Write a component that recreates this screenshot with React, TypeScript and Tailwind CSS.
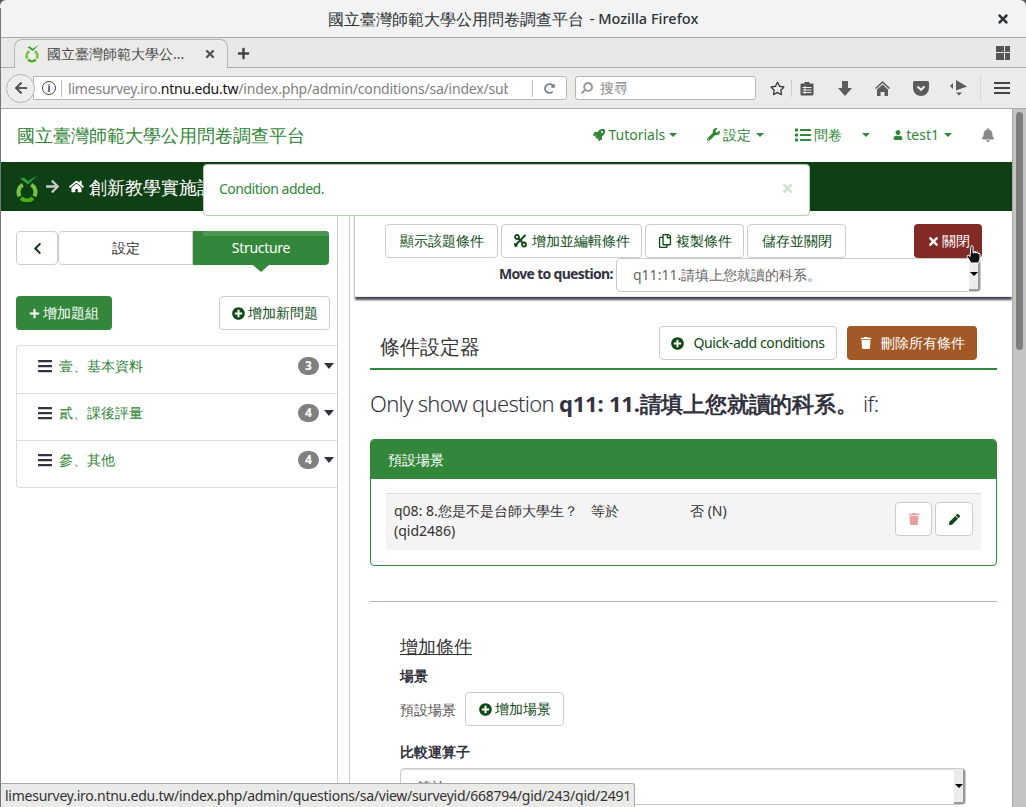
import React from "react";
import {
  FaRocket, FaWrench, FaList, FaUser, FaBell, FaHome, FaPlus, FaPlusCircle, FaTrash, FaPen,
  FaTimes, FaRegCopy, FaChevronLeft, FaBars, FaArrowRight, FaArrowLeft,
  FaRegStar, FaSearch, FaRedoAlt,
} from "react-icons/fa";

function Logo({ size = 22 }: { size?: number }) {
  return (
    <svg width={size} height={(size * 27) / 22} viewBox="0 0 22 27" fill="none">
      <path d="M6.750 9.640A8.500 8.500 0 0 0 3.640 21.250" stroke="#7cc242" strokeWidth="4" />
      <path d="M5 23A8.500 8.500 0 0 0 17 23" stroke="#4aad1c" strokeWidth="4" />
      <path d="M18.360 21.250A8.500 8.500 0 0 0 15.250 9.640" stroke="#7cc242" strokeWidth="4" />
      <path d="M4 3.500L8 2.500L12 6L22 0L12 9.500z" fill="#2f9a3a" />
    </svg>
  );
}

function Caret({ className = "" }: { className?: string }) {
  return <span className={`inline-block w-0 h-0 border-x-[4px] border-x-transparent border-t-[4px] border-t-current ${className}`} />;
}

function Browser() {
  return (
    <div className="flex flex-col shrink-0 font-[Roboto,'Noto_Sans_CJK_TC',sans-serif]">
      <div className="h-[38px] bg-[#f3f3f3] border-b border-[#a9a9a7] rounded-t-[6px] flex items-center justify-center relative text-[#2e3436] whitespace-nowrap">
        <span className="text-[16px] font-medium leading-none">國立臺灣師範大學公用問卷調查平台</span>
        <span className="ml-[6px] text-[14.5px] font-medium leading-none">- Mozilla Firefox</span>
        <FaTimes className="absolute right-[16px] top-[12px] text-[14px] text-[#2e3436]" />
      </div>
      <div className="h-[30px] bg-[#e8e8e7] border-b border-[#adadab] flex items-end pl-[14px] pr-[16px] relative">
        <div className="w-[214px] h-[29px] bg-[#ebebe9] border border-b-0 border-[#b5b5b3] rounded-t-[8px] flex items-center pl-[10px] pr-[11px] -mb-px">
          <Logo size={14} />
          <span className="ml-[8px] text-[14px] text-[#4a4a4a] whitespace-nowrap leading-none">國立臺灣師範大學公...</span>
          <FaTimes className="ml-auto text-[12px] text-[#555]" />
        </div>
        <FaPlus className="ml-[9px] mb-[7px] text-[13px] text-[#444]" />
        <div className="ml-auto mb-[7px] grid grid-cols-[8px_5px] grid-rows-[6px_7px] gap-[1px]">
          <span className="bg-[#555]" /><span className="bg-[#555]" /><span className="bg-[#555]" /><span className="bg-[#555]" />
        </div>
      </div>
      <div className="h-[41px] bg-[#ebebe9] border-b border-[#adadab] flex items-center pl-[6px]">
        <div className="w-[29px] h-[29px] rounded-full bg-[#eeeeec] border border-[#b5b5b3] flex items-center justify-center z-10 shrink-0">
          <FaArrowLeft className="text-[14px] text-[#555]" />
        </div>
        <div className="-ml-[2px] w-[534px] h-[24px] bg-white border border-[#b8b8b6] rounded-r-[3px] flex items-center pl-[8px] text-[14px] whitespace-nowrap overflow-hidden shrink-0">
          <span className="w-[14px] h-[14px] rounded-full border border-[#444] text-[10px] leading-[12px] text-center text-[#444] shrink-0 font-bold">i</span>
          <span className="ml-[5px] w-px h-[17px] bg-[#bbb] shrink-0" />
          <span className="ml-[6px] w-[440px] overflow-hidden text-[#808080] shrink-0 tracking-[-0.2px]">limesurvey.iro.<span className="text-[#111]">ntnu.edu.tw</span>/index.php/admin/conditions/sa/index/subaction</span>
          <span className="ml-auto w-px h-[17px] bg-[#bbb] shrink-0" />
          <FaRedoAlt className="mx-[11px] text-[11px] text-[#77808a] shrink-0" />
        </div>
        <div className="ml-[8px] w-[181px] h-[24px] bg-white border border-[#b8b8b6] rounded-[3px] flex items-center pl-[5px] text-[14px] text-[#8a8a8a] leading-none shrink-0">
          <FaSearch className="text-[12px] text-[#9a9a9a] mr-[7px] scale-x-[-1]" />搜尋
        </div>
        <FaRegStar className="ml-[14px] text-[15px] text-[#333] shrink-0" />
        <span className="ml-[6px] w-px h-[17px] bg-[#ccc] shrink-0" />
        <svg className="ml-[8px] shrink-0" width="14" height="15" viewBox="0 0 14 15" fill="none">
          <path d="M1.500 2.500h3V1h5v1.500h3A1 1 0 0 1 13.500 3.500v10a1 1 0 0 1-1 1h-11a1 1 0 0 1-1-1v-10a1 1 0 0 1 1-1z" fill="#555" />
          <path d="M2.500 6.500h9M2.500 9h9M2.500 11.500h9M5 5v8" stroke="#ebebe9" strokeWidth="1" />
        </svg>
        <svg className="ml-[24px] shrink-0" width="14" height="15" viewBox="0 0 14 15"><path d="M4 0h6v7h4l-7 8-7-8h4z" fill="#5c5c5c" /></svg>
        <svg className="ml-[23px] shrink-0" width="15" height="15" viewBox="0 0 15 15" fill="#5c5c5c">
          <path d="M7.500 0L15 7l-1 1-6.500-6L1 8 0 7z" />
          <path d="M7.500 3.500L13 8.500V15H9.500v-4h-4v4H2V8.500z" />
        </svg>
        <svg className="ml-[23px] shrink-0" width="16" height="15" viewBox="0 0 16 15">
          <path d="M1.500 0h13A1.500 1.500 0 0 1 16 1.500V7A8 8 0 0 1 0 7V1.500A1.500 1.500 0 0 1 1.500 0z" fill="#5c5c5c" />
          <path d="M4.500 5.500L8 8.800 11.500 5.500" stroke="#eee" strokeWidth="2" fill="none" />
        </svg>
        <svg className="ml-[21px] shrink-0" width="17" height="16" viewBox="0 0 17 16" fill="#5c5c5c">
          <path d="M6 0L17 6.500 6 10.500zM0 6l3-3v6zM6 12.500h6L9 15.500z" />
        </svg>
        <span className="ml-[13px] w-px h-[26px] bg-[#d8d8d6] shrink-0" />
        <div className="ml-[13px] flex flex-col gap-[3px] shrink-0">
          <span className="w-[16px] h-[2px] bg-[#444]" /><span className="w-[16px] h-[2px] bg-[#444]" /><span className="w-[16px] h-[2px] bg-[#444]" />
        </div>
      </div>
    </div>
  );
}

function NavItem({ icon, label, gap = "ml-[5px]" }: { icon: React.ReactNode; label: string; gap?: string }) {
  return (
    <span className="flex items-center text-[14px] text-[#328637] whitespace-nowrap leading-none -mt-[2px]">
      {icon}
      <span className="ml-[3px]">{label}</span>
      <Caret className={gap} />
    </span>
  );
}

function Btn({ children, className = "" }: { children: React.ReactNode; className?: string }) {
  return (
    <div className={`h-[34px] border border-[#cccccc] rounded-[4px] bg-white flex items-center justify-center text-[14px] text-[#0f4a17] leading-none whitespace-nowrap ${className}`}>
      {children}
    </div>
  );
}

function Sidebar() {
  const rows = [
    ["壹、基本資料", "3"],
    ["貳、課後評量", "4"],
    ["參、其他", "4"],
  ];
  return (
    <div className="w-[338px] shrink-0 border-r border-[#cccccc] pl-[16px] pt-[20px]">
      <div className="flex h-[34px] w-[313px]">
        <div className="w-[42px] border border-[#cccccc] rounded-[4px] flex items-center justify-center text-[#14301a]">
          <FaChevronLeft className="text-[13px]" />
        </div>
        <div className="w-[135px] border border-[#cccccc] rounded-l-[4px] flex items-center justify-center text-[14px] text-[#333] leading-none">設定</div>
        <div className="w-[136px] bg-[#33873a] rounded-r-[4px] flex items-center justify-center text-[14px] text-white relative leading-none tracking-[-0.3px]">
          Structure
          <span className="absolute left-[10px] right-0 top-0 h-[5px] bg-[#4e9654] rounded-tr-[4px]" />
          <span className="absolute left-[60px] top-[34px] w-0 h-0 border-x-[8px] border-x-transparent border-t-[7px] border-t-[#33873a]" />
        </div>
      </div>
      <div className="mt-[31px] flex w-[314px] justify-between">
        <div className="w-[96px] h-[34px] rounded-[4px] bg-[#33873a] text-white flex items-center justify-center text-[14px] leading-none">
          <FaPlus className="text-[11px] mr-[3px]" />增加題組
        </div>
        <Btn className="w-[111px]"><FaPlusCircle className="text-[13px] mr-[3px]" />增加新問題</Btn>
      </div>
      <div className="mt-[15px] border border-r-0 border-[#dddddd] rounded-l-[4px]">
        {rows.map(([t, n], i) => (
          <div key={t} className={`h-[47px] flex items-center pl-[20px] pb-[8px] ${i > 0 ? "border-t border-[#dddddd]" : ""}`}>
            <FaBars className="text-[16px] text-[#333340]" />
            <span className="ml-[6px] text-[14px] text-[#328637] leading-none">{t}</span>
            <span className="ml-auto w-[21px] h-[18px] rounded-full bg-[#808080] text-white text-[12px] font-bold flex items-center justify-center">{n}</span>
            <span className="ml-[5px] mr-[3px] w-0 h-0 border-x-[5px] border-x-transparent border-t-[6px] border-t-[#333340]" />
          </div>
        ))}
      </div>
    </div>
  );
}

function Main() {
  return (
    <div className="flex-1 min-w-0 ml-[11px] border-l border-[#cccccc] relative">
      <div className="h-[86px] ml-[5px] bg-white shadow-[0_3px_2px_#4a4a55] border-b border-[#e8e8e8] relative pt-[13px]">
        <div className="flex pl-[30px] gap-[3px]">
          <Btn className="w-[113px]">顯示該題條件</Btn>
          <Btn className="w-[141px] bg-[#e6e6e6] border-[#adadad]">
            <svg className="mr-[5px]" width="13" height="14" viewBox="0 0 13 14" fill="none" stroke="#0f4a17">
              <circle cx="3" cy="3" r="2" strokeWidth="1.800" />
              <circle cx="10" cy="10.500" r="2" strokeWidth="1.800" />
              <path d="M4.500 4.500L9 9" strokeWidth="2" />
              <path d="M11.500 1L2 10.500M2 13l-1-2.500 2.500 1" strokeWidth="2" />
            </svg>
            增加並編輯條件
          </Btn>
          <Btn className="w-[99px]"><FaRegCopy className="text-[14px] mr-[4px]" />複製條件</Btn>
          <Btn className="w-[99px]">儲存並關閉</Btn>
          <div className="ml-[65px] w-[68px] h-[34px] rounded-[4px] bg-[#822a25] text-white text-[14px] flex items-center justify-center leading-none">
            <FaTimes className="text-[13px] mr-[2px]" />關閉
          </div>
        </div>
        <div className="flex items-center h-[34px]">
          <span className="ml-[144px] text-[14px] font-bold text-[#333340] w-[117px] whitespace-nowrap -mt-[2px] leading-none tracking-[-0.7px]">Move to question:</span>
          <div className="w-[365px] h-[34px] border border-[#cccccc] rounded-[4px] flex items-center pl-[16px] text-[14px] text-[#666] relative overflow-hidden leading-none">
            q11:11.請填上您就讀的科系。
            <span className="absolute right-0 top-0 bottom-0 w-[11px] bg-[#ececec] border-r-2 border-b-2 border-[#999] flex items-center justify-center text-black">
              <Caret />
            </span>
          </div>
        </div>
      </div>

      <div className="pl-[20px] pr-[15px]">
        <div className="mt-[29px] h-[44px] border-b-[2px] border-[#33873a] flex items-start">
          <span className="ml-[10px] mt-[7px] text-[20px] leading-[28px] text-[#333]">條件設定器</span>
          <Btn className="ml-auto w-[178px] tracking-[-0.4px]"><FaPlusCircle className="text-[13px] mr-[9px]" />Quick-add conditions</Btn>
          <div className="ml-[10px] mr-[20px] w-[130px] h-[34px] rounded-[4px] bg-[#a35827] text-white text-[14px] flex items-center justify-center leading-none">
            <FaTrash className="text-[12px] mr-[9px]" />刪除所有條件
          </div>
        </div>
        <div className="mt-[18px] text-[22px] leading-[30px] font-light text-[#333340] whitespace-nowrap">
          <span className="tracking-[-0.7px]">Only show question </span><b className="font-bold tracking-[-0.2px]">q11: 11.請填上您就讀的科系。</b><span className="tracking-[-0.5px]"> if:</span>
        </div>
        <div className="mt-[21px] h-[127px] border border-[#33873a] rounded-[4px] overflow-hidden">
          <div className="h-[39px] bg-[#33873a] text-white text-[14px] flex items-center pl-[17px] leading-none">預設場景</div>
          <div className="mt-[14px] mx-[15px] h-[57px] bg-[#f4f4f4] border-t border-[#dddddd] flex text-[14px] leading-[20px] text-[#333] relative">
            <div className="ml-[8px] mt-[7px] w-[197px]">q08: 8.您是不是台師大學生？ (qid2486)</div>
            <div className="mt-[7px] w-[99px]">等於</div>
            <div className="mt-[7px]">否 (N)</div>
            <div className="ml-auto mr-[8px] mt-[8px] flex gap-[3px]">
              <Btn className="w-[37px]"><FaTrash className="text-[12px] text-[#e6a0a0]" /></Btn>
              <Btn className="w-[38px]"><FaPen className="text-[11px]" /></Btn>
            </div>
          </div>
        </div>
        <div className="mt-[35px] border-t border-[#a9bba9]" />
        <div className="pl-[30px] text-[14px] text-[#333340]">
          <div className="mt-[32px] text-[18px] leading-[24px] underline text-[#333]">增加條件</div>
          <div className="mt-[8px] font-bold leading-[20px]">場景</div>
          <div className="mt-[6px] flex items-center">
            <span className="text-[#555]">預設場景</span>
            <Btn className="ml-[9px] w-[99px]"><FaPlusCircle className="text-[13px] mr-[3px]" />增加場景</Btn>
          </div>
          <div className="mt-[16px] font-bold leading-[20px]">比較運算子</div>
          <div className="mt-[6px] w-[566px] h-[37px] border border-[#cccccc] rounded-[4px] shadow-[inset_0_1px_1px_#ddd] flex items-center pl-[16px] text-[#666] relative overflow-hidden">
            等於
            <span className="absolute right-0 top-0 bottom-0 w-[11px] bg-[#ececec] border-r-2 border-b-2 border-[#999] flex items-center justify-center text-black">
              <Caret />
            </span>
          </div>
        </div>
      </div>
    </div>
  );
}

export default function App() {
  return (
    <div className="font-[Roboto,'Noto_Sans_CJK_TC',sans-serif] w-[1026px] h-[807px] relative overflow-hidden flex flex-col bg-[#555]">
      <Browser />
      <div className="flex-1 min-h-0 flex bg-white">
        <div className="flex-1 min-w-0 flex flex-col">
          <div className="h-[53px] shrink-0 flex items-center pl-[17px] pr-[17px]">
            <span className="text-[18px] text-[#328637] leading-none -mt-[2px]">國立臺灣師範大學公用問卷調查平台</span>
            <div className="ml-auto flex items-center">
              <NavItem icon={<FaRocket className="text-[12px]" />} label="Tutorials" gap="ml-[4px]" />
              <span className="ml-[30px]"><NavItem icon={<FaWrench className="text-[13px]" />} label="設定" /></span>
              <span className="ml-[31px]"><NavItem icon={<FaList className="text-[16px]" />} label="問卷" gap="ml-[20px]" /></span>
              <span className="ml-[23px]"><NavItem icon={<FaUser className="text-[10px]" />} label="test1" /></span>
              <FaBell className="ml-[29px] text-[14px] text-[#8a8a8a] -mt-[2px]" />
            </div>
          </div>
          <div className="h-[49px] shrink-0 bg-[#0f4015] flex items-center pl-[16px] text-white text-[18px] whitespace-nowrap overflow-hidden leading-none">
            <span className="mt-[3px]"><Logo size={22} /></span>
            <FaArrowRight className="ml-[7px] text-[15px] text-[#c9c9c9]" />
            <FaHome className="ml-[9px] text-[15px]" />
            <span className="ml-[5px]">創新教學實施計畫</span>
          </div>
          <div className="flex-1 min-h-0 flex overflow-hidden">
            <Sidebar />
            <Main />
          </div>
        </div>
        <div className="w-[14px] shrink-0 bg-[#c4c4c2] border-l border-[#a8a8a8] relative">
          <span className="absolute left-[3px] top-[3px] w-[7px] h-[238px] rounded-full bg-[#7e7e7e]" />
        </div>
      </div>

      <div className="absolute left-[203px] top-[164px] w-[607px] h-[52px] bg-white border border-[#aed0af] rounded-[4px] flex items-center pl-[15px] pb-[3px] text-[14px] text-[#328637] leading-none tracking-[-0.5px]">
        Condition added.
        <FaTimes className="absolute right-[15px] top-[17px] text-[13px] text-[#cfdfd0]" />
      </div>

      <svg className="absolute left-[966px] top-[245px]" width="16" height="19" viewBox="0 0 16 19">
        <path d="M5 1.500a1 1 0 0 1 2 0V8h1V6.500h1.500V8h1V7h1.500v1.500h1V8l1 1v5l-1.500 4H5L1 11.500 2 10l2 1.500z" fill="#111" stroke="#fff" strokeWidth="1" />
      </svg>

      <div className="absolute left-0 bottom-0 w-[635px] h-[24px] bg-[#eaeae8] border-t border-r border-[#a9a9a7] rounded-tr-[3px] flex items-center pl-[5px] text-[14px] text-[#333] whitespace-nowrap leading-none tracking-[-0.25px]">
        limesurvey.iro.ntnu.edu.tw/index.php/admin/questions/sa/view/surveyid/668794/gid/243/qid/2491
      </div>
      <span className="absolute left-0 top-[8px] bottom-0 w-px bg-[#777]" />
    </div>
  );
}
